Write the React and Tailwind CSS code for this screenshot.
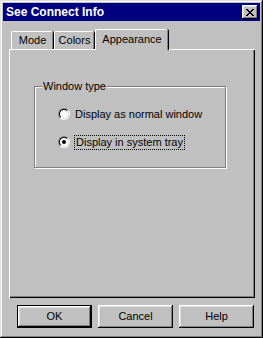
const font = { fontFamily: '"Liberation Sans", Arial, sans-serif' }

/* ── Win95 radio ── */
const Radio = ({ checked }) => (
  <span className="w-[12px] h-[12px] rounded-full border border-t-[#808080] border-l-[#808080] border-b-white border-r-white flex items-center justify-center shrink-0">
    <span className="w-[10px] h-[10px] rounded-full border border-t-black border-l-black border-b-[#dfdfdf] border-r-[#dfdfdf] bg-white flex items-center justify-center">
      {checked && <span className="w-[4px] h-[4px] rounded-full bg-black" />}
    </span>
  </span>
)

/* ── Push button ── */
const Btn = ({ label, isDefault }) => (
  <button
    type="button"
    className={`w-[75px] h-[23px] bg-[#c0c0c0] text-[11px] text-black flex items-center justify-center ${
      isDefault
        ? 'border border-black shadow-[inset_-1px_-1px_#000,inset_1px_1px_#fff,inset_-2px_-2px_#808080,inset_2px_2px_#dfdfdf]'
        : 'shadow-[inset_-1px_-1px_#000,inset_1px_1px_#fff,inset_-2px_-2px_#808080,inset_2px_2px_#dfdfdf]'
    }`}
  >
    {label}
  </button>
)

/* ── Tab ── */
const Tab = ({ label, selected, className = '' }) =>
  selected ? (
    <div className={`relative z-10 h-[21px] -mb-[1px] bg-[#c0c0c0] border-t border-l border-white rounded-tl-[2px] rounded-tr-[2px] shadow-[inset_-1px_0_#808080,1px_0_#000] flex items-center justify-center pb-[2px] text-[11px] ${className}`}>
      {label}
    </div>
  ) : (
    <div className={`h-[18px] border-t border-l border-white rounded-tl-[2px] rounded-tr-[2px] shadow-[inset_-1px_0_#808080,1px_0_#000] flex items-center justify-center text-[11px] ${className}`}>
      {label}
    </div>
  )

export default function App() {
  return (
    <div
      style={font}
      className="w-[263px] h-[338px] bg-[#c0c0c0] p-[3px] flex flex-col text-black shadow-[inset_-1px_-1px_#000,inset_1px_1px_#dfdfdf,inset_-2px_-2px_#808080,inset_2px_2px_#fff]"
    >
      {/* title bar */}
      <div className="h-[18px] bg-[#000080] flex items-center justify-between pl-[3px] pr-[2px]">
        <span className="text-white font-bold text-[12px] leading-none">See Connect Info</span>
        <span className="w-[16px] h-[14px] bg-[#c0c0c0] flex items-center justify-center shadow-[inset_-1px_-1px_#000,inset_1px_1px_#fff,inset_-2px_-2px_#808080,inset_2px_2px_#dfdfdf]">
          <svg width="8" height="7" viewBox="0 0 8 7" shapeRendering="crispEdges">
            <path d="M0 0h2v1h-2zM6 0h2v1h-2zM1 1h2v1h-2zM5 1h2v1h-2zM2 2h4v1h-4zM3 3h2v1h-2zM2 4h4v1h-4zM1 5h2v1h-2zM5 5h2v1h-2zM0 6h2v1h-2zM6 6h2v1h-2z" fill="#000" />
          </svg>
        </span>
      </div>

      {/* body */}
      <div className="pl-[6px] pt-[8px] flex flex-col">
        {/* tabs */}
        <div className="flex items-end h-[20px] pl-[2px]">
          <Tab label="Mode" className="w-[42px]" />
          <Tab label="Colors" className="w-[40px] ml-[1px]" />
          <Tab label="Appearance" selected className="w-[73px] ml-[1px]" />
        </div>

        {/* panel */}
        <div className="w-[246px] h-[249px] border-t border-l border-white shadow-[inset_-1px_-1px_#000,inset_-2px_-2px_#808080] pl-[24px] pt-[36px]">
          <div className="relative w-[192px] h-[82px] border border-[#808080] shadow-[1px_1px_0_#fff,inset_1px_1px_0_#fff] pl-[23px] pt-[21px] flex flex-col gap-[16px]">
            <span className="absolute -top-[8px] left-[7px] px-[1px] bg-[#c0c0c0] text-[11px] leading-[14px]">Window type</span>
            <label className="flex items-center gap-[5px] text-[11px] h-[12px]">
              <Radio />
              <span>Display as normal window</span>
            </label>
            <label className="flex items-center gap-[4px] text-[11px] h-[12px]">
              <Radio checked />
              <span className="border border-dotted border-black px-[1px] leading-[13px]">Display in system tray</span>
            </label>
          </div>
        </div>

        {/* buttons */}
        <div className="flex gap-[6px] pl-[8px] pt-[7px]">
          <Btn label="OK" isDefault />
          <Btn label="Cancel" />
          <Btn label="Help" />
        </div>
      </div>
    </div>
  )
}
